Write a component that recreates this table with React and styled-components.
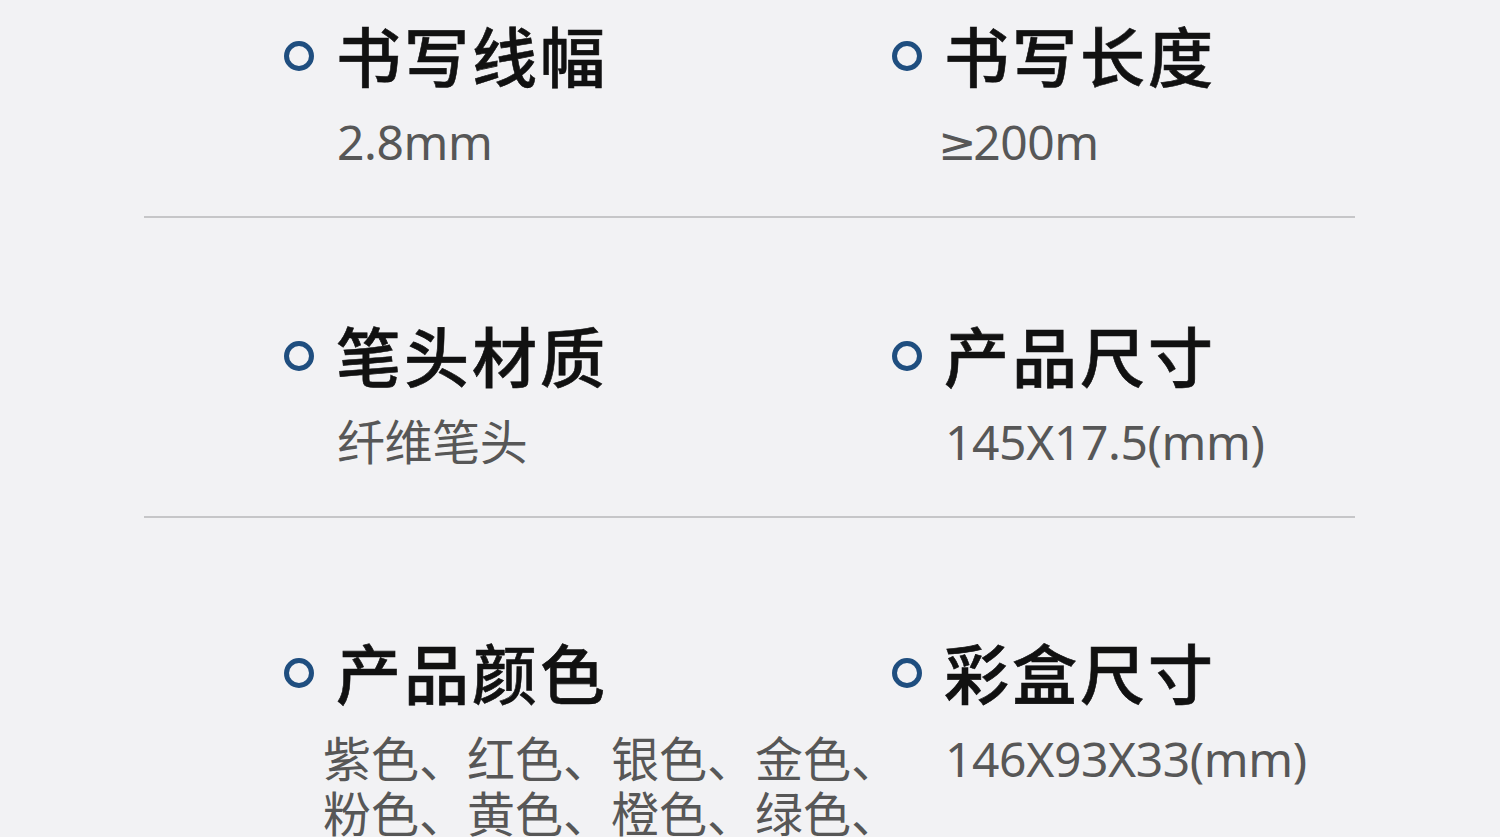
import React from 'react';
import styled, { createGlobalStyle } from 'styled-components';

const specs = [
  {
    top: 15,
    items: [
      { title: '书写线幅', value: '2.8mm' },
      { title: '书写长度', value: '200m', sign: '≥' },
    ],
  },
  {
    top: 97,
    items: [
      { title: '笔头材质', value: '纤维笔头' },
      { title: '产品尺寸', value: '145X17.5(mm)' },
    ],
  },
  {
    top: 114,
    last: true,
    items: [
      {
        title: '产品颜色',
        value: '紫色、红色、银色、金色、粉色、黄色、橙色、绿色、蓝色、黑色',
        indent: 39,
        wrap: true,
      },
      { title: '彩盒尺寸', value: '146X93X33(mm)' },
    ],
  },
];

const App = () => {
  return (
    <>
      <GlobalStyle />
      <Page>
        {specs.map((row, i) => (
          <Section key={i} $top={row.top} $last={row.last}>
            <Grid>
              {row.items.map((item) => (
                <Item key={item.title}>
                  <TitleRow>
                    <Bullet />
                    <Title>{item.title}</Title>
                  </TitleRow>
                  <Value
                    $indent={item.sign ? 46 : item.indent}
                    $wrap={item.wrap}
                  >
                    {item.sign && <Sign>{item.sign}</Sign>}
                    {item.value}
                  </Value>
                </Item>
              ))}
            </Grid>
          </Section>
        ))}
      </Page>
    </>
  );
};

export default App;

const GlobalStyle = createGlobalStyle`
  html, body {
    margin: 0;
    padding: 0;
    background: #f2f2f4;
    overflow: hidden;
  }
`;

const Page = styled.div`
  width: 1211px;
  margin-left: 144px;
  height: 837px;
  overflow: hidden;
`;

const Section = styled.div`
  padding-top: ${(p) => p.$top}px;
  padding-bottom: 46px;
  border-bottom: ${(p) => (p.$last ? 'none' : '2px solid #c6c6c8')};
`;

const Grid = styled.div`
  display: grid;
  grid-template-columns: 608px 1fr;
  padding-left: 140px;
`;

const Item = styled.div`
  display: flex;
  flex-direction: column;
  gap: 20px;
`;

const TitleRow = styled.div`
  display: flex;
  align-items: center;
  gap: 22px;
`;

const Bullet = styled.span`
  width: 20px;
  height: 20px;
  border: 5px solid #1f4e7f;
  border-radius: 50%;
  flex-shrink: 0;
  margin-top: 2px;
`;

const Title = styled.div`
  font-family: 'Noto Sans CJK SC', 'Noto Sans', sans-serif;
  font-size: 65px;
  font-weight: 500;
  letter-spacing: 3px;
  line-height: 79px;
  color: #111;
  -webkit-text-stroke: 0.6px #111;
`;

const Value = styled.div`
  margin-left: ${(p) => p.$indent ?? 53}px;
  width: ${(p) => (p.$wrap ? '600px' : 'auto')};
  height: ${(p) => (p.$wrap ? 'auto' : '56px')};
  font-family: 'Noto Sans', 'Noto Sans CJK SC', sans-serif;
  font-size: 48px;
  letter-spacing: ${(p) => (p.$wrap ? 0 : -0.4)}px;
  line-height: ${(p) => (p.$wrap ? 55 : 56)}px;
  color: #575757;
  white-space: ${(p) => (p.$wrap ? 'normal' : 'nowrap')};
`;

const Sign = styled.span`
  font-family: 'DejaVu Sans', sans-serif;
  font-size: 46px;
  line-height: 10px;
  margin-right: -3px;
`;
